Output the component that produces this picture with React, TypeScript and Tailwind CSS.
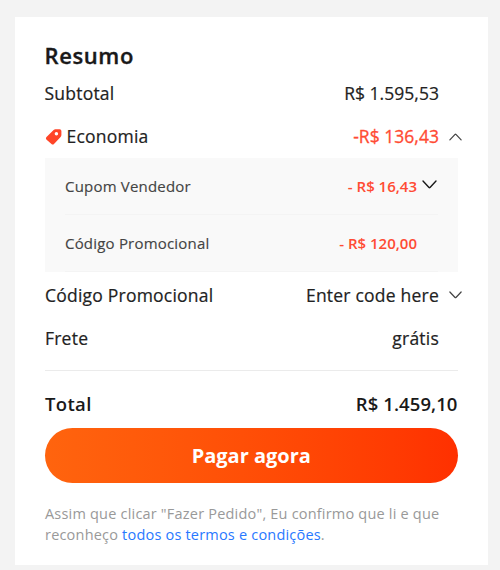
import type { ReactNode } from "react";

function Chevron({ up = false, size = "sm" }: { up?: boolean; size?: "sm" | "md" }) {
  return (
    <svg
      className={size === "md" ? "block h-[9px] w-[15px]" : "block h-[8px] w-[13px]"}
      viewBox="0 0 15 9"
      fill="none"
      stroke={size === "md" ? "#191919" : "#444"}
      strokeWidth={1.4}
      strokeLinecap="round"
      strokeLinejoin="round"
    >
      <path d={up ? "M1 7.8 L7 1.5 Q7.5 1 8 1.5 L14 7.8" : "M1 1 L7 7.4 Q7.5 7.9 8 7.4 L14 1"} />
    </svg>
  );
}

function TagIcon() {
  return (
    <svg className="block h-4 w-[17px]" viewBox="0 0 17 16">
      <path
        fillRule="evenodd"
        fill="#ff4528"
        d="M8.6 1 Q9.4 0.2 10.4 0.2 L14.6 0.2 Q16.4 0.2 16.4 2 L16.4 6 Q16.4 7.1 15.6 7.9 L9 14.9 Q7.8 16.1 6.5 15 L1.6 10.7 Q0.3 9.4 1.5 8.1 Z M11.4 3.1 A1.75 1.75 0 1 0 11.4 6.6 A1.75 1.75 0 1 0 11.4 3.1 Z"
      />
    </svg>
  );
}

function Row({
  label,
  value,
  icon,
  className,
}: {
  label: ReactNode;
  value: ReactNode;
  icon?: ReactNode;
  className: string;
}) {
  return (
    <div
      className={`flex items-center text-[17.5px] tracking-[0.22px] text-[#222] [-webkit-text-stroke:0.2px] ${className}`}
    >
      <div className="flex flex-1 items-center">{label}</div>
      <div className="-mr-[0.5px]">{value}</div>
      <div className="-mr-1 flex w-[23px] justify-end">{icon}</div>
    </div>
  );
}

export default function App() {
  return (
    <main className="h-[570px] w-[500px] overflow-hidden bg-[#f3f3f3] pt-[17px] pl-[15px] font-['Open_Sans','Noto_Sans',sans-serif] whitespace-nowrap">
      <section className="flex h-[548px] w-[472.5px] flex-col bg-white px-[30px] pt-[22px]">
        <h1 className="h-8 text-[22px] leading-8 font-semibold tracking-[0.6px] text-[#191919] [-webkit-text-stroke:0.35px]">
          <span className="-ml-[0.5px]">Resumo</span>
        </h1>
        <Row
          className="h-11"
          label={<span className="-ml-[0.5px]">Subtotal</span>}
          value={<span className="tracking-[0.03px]">R$ 1.595,53</span>}
        />
        <Row
          className="h-[43px]"
          label={
            <>
              <TagIcon />
              <span className="ml-[4.5px]">Economia</span>
            </>
          }
          value={<span className="tracking-[0.03px] text-[#ff4b33] [-webkit-text-stroke:0.3px]">-R$ 136,43</span>}
          icon={<Chevron up />}
        />
        <div className="flex h-[114px] flex-col bg-[#f9f9f9] px-5 text-[15px] tracking-[0.2px] text-[#444]">
          <div className="flex h-[57px] items-center border-b border-[#f4f4f4] pt-px">
            <span className="flex-1 [-webkit-text-stroke:0.15px]">Cupom Vendedor</span>
            <span className="font-semibold tracking-[0px] text-[#ff4b33]">- R$ 16,43</span>
            <span className="mr-px ml-[4.5px] pb-[4px]">
              <Chevron size="md" />
            </span>
          </div>
          <div className="flex h-[57px] items-center border-b border-[#f4f4f4] pt-px">
            <span className="flex-1 [-webkit-text-stroke:0.15px]">Código Promocional</span>
            <span className="mr-[20.5px] font-semibold tracking-[0px] text-[#ff4b33]">- R$ 120,00</span>
          </div>
        </div>
        <Row className="h-[45px] pt-px" label="Código Promocional" value="Enter code here" icon={<Chevron />} />
        <Row className="h-[43px]" label="Frete" value="grátis" />
        <div className="mt-[10px] h-px bg-[#ebebeb]" />
        <div className="mt-[16px] flex h-[34px] items-center justify-between text-[18.5px] font-semibold text-[#191919]">
          <span className="tracking-[0.35px]">Total</span>
          <span className="tracking-[0.08px]">R$ 1.459,10</span>
        </div>
        <button className="mt-[7px] h-[55px] w-full rounded-full bg-linear-to-r from-[#ff640e] to-[#ff3000] text-[20px] font-bold text-white">
          Pagar agora
        </button>
        <p className="mt-5 text-[14.5px] leading-[21px] tracking-[0.2px] text-[#999]">
          Assim que clicar "Fazer Pedido", Eu confirmo que li e que
          <br />
          reconheço <a className="text-[#2878ff]">todos os termos e condições</a>.
        </p>
      </section>
    </main>
  );
}
